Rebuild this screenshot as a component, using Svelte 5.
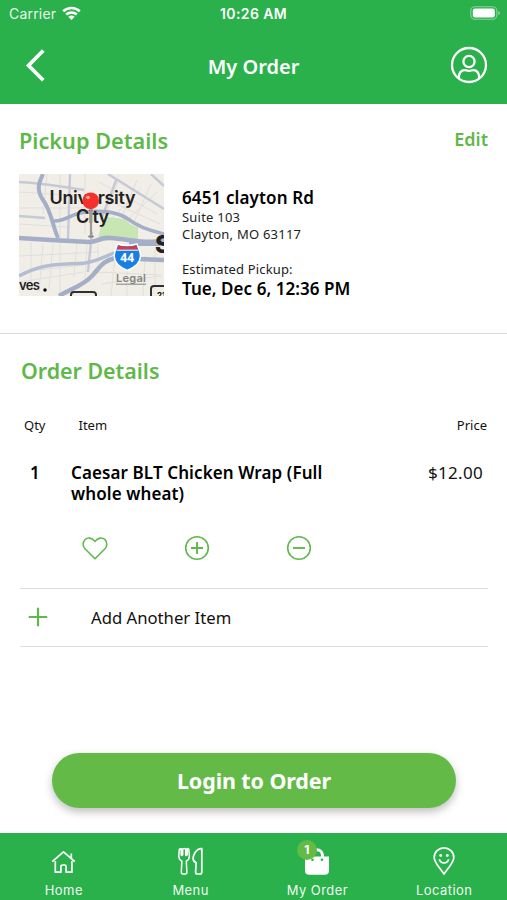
<script>
  const tabs = [
    { id: 'home', label: 'Home' },
    { id: 'menu', label: 'Menu' },
    { id: 'order', label: 'My Order', badge: 1 },
    { id: 'location', label: 'Location' },
  ];
</script>

<div class="screen">
  <header>
    <div class="status">
      <span class="carrier">Carrier</span>
      <svg class="wifi" width="19" height="15" viewBox="0 0 19 15">
        <g fill="none" stroke="#fff" stroke-width="2.6">
          <path d="M1.2 5.2C6 .9 13 .9 17.8 5.2" />
          <path d="M4.2 8.6C7.3 5.9 11.700 5.900 14.800 8.600" />
        </g>
        <path d="M6.300 10.700Q9.500 8.200 12.700 10.700L9.500 14Z" fill="#fff" />
      </svg>
      <span class="time">10:26 AM</span>
      <svg class="battery" width="31" height="14" viewBox="0 0 31 14">
        <rect x=".8" y=".8" width="26" height="12.400" rx="4" fill="none" stroke="#fff" stroke-opacity=".45" stroke-width="1.100" />
        <rect x="2.800" y="2.500" width="22" height="9" rx="2.200" fill="#fff" />
        <path d="M28.300 5v4.200q1.600-.7 1.600-2.100t-1.600-2.100" fill="#fff" fill-opacity=".5" />
      </svg>
    </div>
    <div class="bar">
      <svg width="22" height="36" viewBox="0 0 22 36"><path d="M18.300 3.500 3.500 18.500 18.300 33.300" fill="none" stroke="#fff" stroke-width="3.700" /></svg>
      <h1>My Order</h1>
      <svg width="38" height="38" viewBox="0 0 38 38">
        <g fill="none" stroke="#fff" stroke-width="2.300">
          <circle cx="19" cy="19" r="17" />
          <circle cx="19" cy="15.500" r="5.600" />
          <path d="M8.700 32c.2-5 2.500-7.900 6-7.900 1.700 0 2.400.8 4.300.8s2.600-.8 4.300-.8c3.500 0 5.800 2.900 6 7.900" />
        </g>
      </svg>
    </div>
  </header>

  <section class="pickup">
    <div class="heading">
      <h2 class="pd">Pickup Details</h2>
      <span class="edit">Edit</span>
    </div>
    <div class="details">
      <svg class="map" width="145" height="122" viewBox="0 0 145 122">
        <rect width="145" height="122" fill="#f0eee6" />
        <g fill="none" stroke="#e1dfdc" stroke-width="1">
          <path d="M0 18 62 22M0 34h70M0 50l50 3M28 0 24 40M41 0v122M66 0v60M12 68v42M24 70 20 118M34 70l-4 45M58 68l-3 35M68 69l-2 35M79 70v30M0 82l80-4M0 108l65-10M20 96l45-5M82 110l60-8M78 98l64 3M96 82l-4 40M108 92v30M126 82l-2 40M136 76v40M92 45l30-30M104 50l34-32M86 25l55 25M100 5 86 42M118 6l-14 34M132 10l-17 38M80 8l58 32" />
        </g>
        <path d="M82 52 88 43 106 45Q113 53 119 53V68L100 63 79 65Z" fill="#c8e6b4" />
        <g fill="none" stroke="#c6c9d7" stroke-width="2.400">
          <path d="M0 8c25 1 45 5 65 8M51 0l-2 65M73 58l-4 40M89 0l56 35M98 4l-16 42M132 0l13 12M0 42l26 2" />
        </g>
        <g fill="none" stroke="#a5aec7" stroke-linejoin="round">
          <path d="M24 0C18 12 18 18 26 29c7 12 8 24 13 35" stroke-width="4" />
          <path d="M35 47c12 0 14-5 26-8 19-4 38-1 48 6 12 9 22 11 36 15" stroke-width="3.600" />
          <path d="M0 64 32 66l38 2c9 0 10-5 22-4 18 1 32 6 53 3" stroke-width="4.600" />
          <path d="M110 70 145 70" stroke-width="4" />
          <path d="M0 102C25 89 37 91 66 89c14-2 22-8 34-12" stroke="#b6bdd0" stroke-width="3.400" />
          <path d="M40 122c15-9 22-9 33-20 9-10 11-15 23-18l49 2" stroke-width="4.500" />
        </g>
        <g class="names">
          <text x="73.500" y="29.500" text-anchor="middle" textLength="86">University</text>
          <text x="73.500" y="48.500" text-anchor="middle" textLength="33">City</text>
          <text x="136" y="79" class="big">S</text>
          <text x="0" y="116" class="small" textLength="21">ves</text>
        </g>
        <circle cx="26" cy="116" r="1.700" />
        <g>
          <path d="M98.500 70q9 3 19.500 0c1.500 5 3.500 7 3.500 12 0 7-5 11-13.200 14.500C100 93 95.200 89 95.200 82c0-5 2-7 3.300-12Z" fill="#1a7fe5" stroke="#fff" stroke-width="1.500" />
          <path d="M99.200 71.500q9 2.500 18.300 0l1.300 4H98Z" fill="#e8343b" />
          <path d="M97.500 76.200h21.500" stroke="#fff" />
          <text x="108.200" y="87.500" text-anchor="middle" class="route">44</text>
        </g>
        <text x="97" y="108" class="legal" textLength="30">Legal</text>
        <path d="M97 110.200h30" stroke="#858585" />
        <path d="M52 122v-1q0-3 3-3h19q3 0 3 3v1M132 122v-7q0-3 3-3h10" fill="none" stroke="#303030" stroke-width="2" />
        <text x="138" y="124" class="tiny">21</text>
        <ellipse cx="72" cy="62.500" rx="3" ry="1.300" fill="#888" />
        <path d="M72 32v30" stroke="#999" stroke-width="2.200" />
        <circle cx="71.700" cy="26.800" r="8.400" fill="#f5302d" />
        <circle cx="69" cy="23.500" r="1.800" fill="#ffb0aa" />
      </svg>
      <div class="address">
        <strong class="a1">6451 clayton Rd</strong>
        <span class="a2">Suite 103</span>
        <span class="a3">Clayton, MO 63117</span>
        <span class="a4">Estimated Pickup:</span>
        <strong class="a5">Tue, Dec 6, 12:36 PM</strong>
      </div>
    </div>
  </section>

  <section class="order">
    <h2 class="od">Order Details</h2>
    <div class="cols"><span class="qty">Qty</span><span class="item">Item</span><span class="price">Price</span></div>
    <div class="line">
      <strong class="count">1</strong>
      <strong class="name">Caesar BLT Chicken Wrap (Full<br />whole wheat)</strong>
      <span class="amount">$12.00</span>
    </div>
    <div class="actions">
      <svg width="26" height="26" viewBox="0 0 26 26"><path d="M13 23.700 3.200 14C.5 11.200.6 7.100 3 4.700c2.800-2.700 7.200-2.100 10 1.700 2.800-3.800 7.200-4.400 10-1.700 2.400 2.400 2.500 6.500-.2 9.300Z" /></svg>
      <svg width="26" height="26" viewBox="0 0 26 26"><circle cx="13" cy="13" r="11.300" /><path d="M13 7v12M7 13h12" stroke-width="1.900" /></svg>
      <svg width="26" height="26" viewBox="0 0 26 26"><circle cx="13" cy="13" r="11.300" /><path d="M7 13h12" stroke-width="1.900" /></svg>
    </div>
    <div class="add">
      <svg width="20" height="20" viewBox="0 0 20 20"><path d="M10 .8v18.400M.8 10h18.400" fill="none" stroke="#5fb94a" stroke-width="2.200" /></svg>
      <span>Add Another Item</span>
    </div>
  </section>

  <button><span>Login to Order</span></button>

  <nav>
    {#each tabs as tab}
      <div class="tab">
        <div class="icon">
          {#if tab.id === 'home'}
            <svg width="30" height="30" viewBox="0 0 30 30"><path d="M7.300 15v11.200h5.600v-5.700q0-1.500 1.500-1.500h2.200q1.500 0 1.500 1.500v5.700h5.800V15M4.200 15.700 15.500 5.800l11.300 9.900M23.300 12V7.500" /></svg>
          {:else if tab.id === 'menu'}
            <svg width="30" height="30" viewBox="0 0 30 30">
              <path d="M4.300 3.500 3.800 10q-.1 3.500 3.100 5.200L6.300 26q0 2 1.700 2h2.200q1.700 0 1.700-2l-.6-10.800q3.200-1.700 3.100-5.200l-.6-6.500q-.3-1.300-1.600-.7v6q-1.300 1.500-1.500 0V3q-1.600-.9-3 0v5.800q-1.300 1.500-1.500 0v-6q-1.500-.5-1.900.7Z" stroke-width="1.500" />
              <path d="M26.800 2.600V26q0 2-1.800 2h-2.600q-1.800 0-1.800-2l.6-9.300q-3.200-1.300-3.100-4.500.6-5.300 4.500-8.400 2.200-1.500 4.200-1.200Z" />
            </svg>
          {:else if tab.id === 'order'}
            <svg width="30" height="30" viewBox="0 0 30 30">
              <path d="M9.500 13V9c0-7 10.500-7 11 0v4" stroke-width="3" />
              <path d="M3 10.500h24v14q0 4.300-4.300 4.300H7.300Q3 28.800 3 24.500Z" fill="#fff" stroke="none" />
              <circle cx="20" cy="13.800" r="1.300" fill="#2ab14b" stroke="none" /><circle cx="10.500" cy="13.800" r="1.300" fill="#2ab14b" stroke="none" />
            </svg>
            <b class="badge">{tab.badge}</b>
          {:else}
            <svg width="30" height="30" viewBox="0 0 30 30">
              <path d="M15 28C11 22 5.200 16.500 5.200 11.400a9.800 9.600 0 0 1 19.600 0C24.800 16.500 19 22 15 28Z" />
              <path d="M10.300 13.200c1.500 5 7.900 5 9.400 0" />
              <circle cx="11.700" cy="9.500" r="1.400" fill="#fff" stroke="none" /><circle cx="18.300" cy="9.500" r="1.400" fill="#fff" stroke="none" />
            </svg>
          {/if}
        </div>
        <span class="label">{tab.label}</span>
      </div>
    {/each}
  </nav>
</div>

<style>
  :global(body) { margin: 0; background: #fff; }
  .screen { width: 507px; height: 900px; display: flex; flex-direction: column; overflow: hidden; background: #fff; color: #111; font-family: "Noto Sans", "Open Sans", sans-serif; white-space: nowrap; }
  svg { display: block; flex: none; }
  h1, h2 { margin: 0; }
  header { height: 104px; background: #2ab14b; color: #fff; flex: none; }
  .status { height: 28px; display: grid; grid-template-columns: auto auto 1fr auto; align-items: center; padding: 0 6px 0 9px; box-sizing: border-box; font: 14px/28px Inter, sans-serif; position: relative; }
  .carrier { letter-spacing: .2px; opacity: .9; }
  .wifi { margin-left: 6px; margin-top: -2px; }
  .time { position: absolute; left: 0; right: 0; text-align: center; font-weight: 600; font-size: 14px; letter-spacing: .4px; }
  .battery { grid-column: 4; margin-top: -2px; }
  .bar { height: 76px; display: flex; align-items: center; justify-content: space-between; padding: 0 19px 2px 25px; box-sizing: border-box; }
  h1 { font-size: 20px; font-weight: 600; line-height: 28px; margin-left: 10px; margin-top: 3px; }
  .pickup { height: 229px; border-bottom: 1px solid #d9d9d9; flex: none; }
  .heading { display: flex; justify-content: space-between; padding: 22px 19px 0; height: 48px; }
  h2 { font-size: 21.700px; line-height: 30px; font-weight: 600; color: #5fb94a; }
  .edit { color: #5fb94a; font-size: 18px; line-height: 26px; font-weight: 600; }
  .details { display: flex; padding-left: 19px; gap: 18px; }
  .names { font-family: Inter, sans-serif; font-weight: 600; font-size: 18px; fill: #222; }
  .names .big { font-size: 24px; font-weight: 800; }
  .names .small { font-size: 13px; }
  .route { font: 700 12px "Noto Sans", sans-serif; fill: #fff; }
  .legal { font: 600 11px Inter, sans-serif; fill: #858585; }
  .tiny { font: 700 8px Inter, sans-serif; }
  .address { display: flex; flex-direction: column; padding-top: 13px; font-size: 13px; line-height: 17px; color: #222; letter-spacing: .22px; }
  .address strong { font-size: 17px; line-height: 22px; font-weight: 600; color: #000; letter-spacing: .12px; }
  .address .a5 { letter-spacing: .06px; }
  .address .a2, .address .a3 { position: relative; top: -.5px; }
  .a4 { margin-top: 18px; letter-spacing: .14px; }
  .order { flex: none; padding: 0 19px 0 20px; }
  .od { padding: 22px 0 0 1px; font-size: 21.400px; letter-spacing: 0; }
  .cols { display: flex; font-size: 13px; line-height: 18px; margin-top: 30px; padding: 0 1px 0 4px; }
  .item { margin-left: 33px; }
  .price { margin-left: auto; }
  .line { display: flex; margin-top: 28px; font-size: 17px; line-height: 21px; }
  .line strong { font-weight: 600; color: #000; font-size: 17px; letter-spacing: .1px; }
  .count { width: 41px; padding-left: 10px; }
  .amount { margin-left: auto; padding-right: 5px; letter-spacing: .3px; }
  .actions { display: flex; gap: 76px; padding: 31px 0 0 62px; fill: none; stroke: #5fb94a; stroke-width: 1.600; }
  .add { display: flex; align-items: center; height: 56.500px; gap: 43px; border-top: 1px solid #dedede; border-bottom: 1px solid #dedede; margin-top: 27px; padding-left: 8px; font-size: 16.700px; }
  button { all: unset; box-sizing: border-box; position: relative; width: 404px; height: 55px; flex: none; margin: auto 0 25px 52px; border-radius: 28px; background: #63ba47; color: #fff; text-align: center; font-size: 21.500px; line-height: 56px; font-weight: 700; letter-spacing: -.1px; box-shadow: 0 4px 9px rgba(0, 0, 0, .25); }
  nav { height: 67px; flex: none; background: #2ab14b; color: #fff; display: flex; padding-top: 13px; box-sizing: border-box; }
  .tab { flex: 1; display: flex; flex-direction: column; align-items: center; }
  .icon { position: relative; fill: none; stroke: #fff; stroke-width: 1.700; stroke-linejoin: round; }
  .label { font: 13px/16px Inter, sans-serif; letter-spacing: .45px; margin-top: 6px; padding-left: 1px; opacity: .93; }
  .badge { position: absolute; left: -5px; top: -6px; width: 20px; height: 20px; border-radius: 50%; background: #63ba47; font: 700 12px/20px Inter, sans-serif; text-align: center; }
</style>
